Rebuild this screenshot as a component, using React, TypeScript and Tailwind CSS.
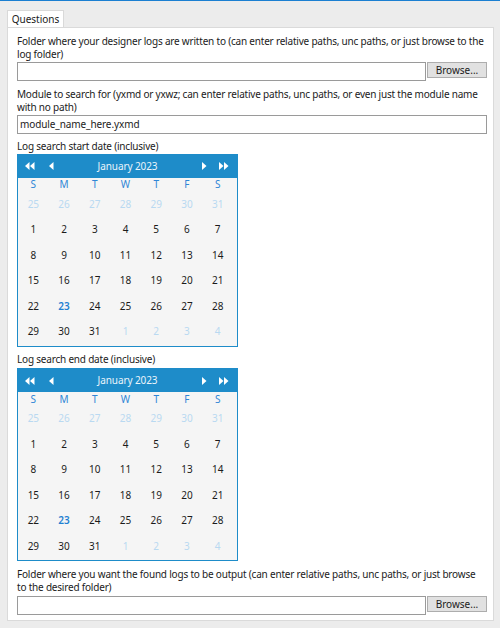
import React from "react";

const FONT = { fontFamily: '"Noto Sans", "Open Sans", sans-serif' };

type Day = { n: number; muted?: boolean; today?: boolean };

// January 2023 starts on a Sunday; the grid shows the tail of December first
// and the first days of February at the end.
function januaryGrid(): Day[] {
  const days: Day[] = [];
  for (let d = 25; d <= 31; d++) days.push({ n: d, muted: true });
  for (let d = 1; d <= 31; d++) days.push({ n: d, today: d === 23 });
  for (let d = 1; d <= 4; d++) days.push({ n: d, muted: true });
  return days;
}

function Arrow({ dir, double }: { dir: "left" | "right"; double?: boolean }) {
  const tri = (x: number) =>
    dir === "left"
      ? `M${x + 4.5} 0 L${x} 4 L${x + 4.5} 8 Z`
      : `M${x} 0 L${x + 4.5} 4 L${x} 8 Z`;
  return (
    <svg width={double ? 10 : 5} height={8} viewBox={`0 0 ${double ? 10 : 5} 8`} fill="#ffffff">
      <path d={tri(0)} />
      {double && <path d={tri(5)} />}
    </svg>
  );
}

function Calendar() {
  const days = januaryGrid();
  return (
    <div className="w-[221px] border border-[#1e8cc9] bg-[#f5f5f5]">
      <div className="flex h-[23px] items-center bg-[#1e8cc9] pl-[3px] pr-[4px] text-[#eaf4fb]">
        <span className="flex w-[18px] justify-center"><Arrow dir="left" double /></span>
        <span className="ml-[3px] flex w-[18px] justify-center"><Arrow dir="left" /></span>
        <span className="flex-1 text-center text-[10px] tracking-[-0.1px]">January 2023</span>
        <span className="flex w-[18px] justify-center"><Arrow dir="right" /></span>
        <span className="ml-[2px] flex w-[18px] justify-center"><Arrow dir="right" double /></span>
      </div>
      <div className="grid grid-cols-7 pr-[4px] pb-[1px]">
        {["S", "M", "T", "W", "T", "F", "S"].map((d, i) => (
          <div key={i} className="flex h-[14px] items-center justify-center text-[10px] text-[#2f86d6]">
            {d}
          </div>
        ))}
        {days.map((d, i) => (
          <div
            key={i}
            className={
              "flex h-[25.5px] items-center justify-center text-[10px] " +
              (d.muted
                ? "text-[#b9d9f1]"
                : d.today
                  ? "font-semibold text-[#1f7fd2]"
                  : "text-[#1b1b1b]")
            }
          >
            {d.n}
          </div>
        ))}
      </div>
    </div>
  );
}

function Label({ children }: { children: React.ReactNode }) {
  return <p className="text-[10px] leading-[12.5px] tracking-[-0.2px] text-[#1b1b1b]">{children}</p>;
}

function PathInput({ value, browse }: { value?: string; browse?: boolean }) {
  return (
    <div className="flex items-start">
      <div
        className={
          "flex h-[19px] items-center border border-[#9a9a9a] bg-white px-[2px] text-[10px] tracking-[-0.1px] text-[#1b1b1b] " +
          (browse ? "w-[409px]" : "w-[470px]")
        }
      >
        {value}
      </div>
      {browse && (
        <button className="ml-[1px] flex h-[16px] w-[60px] items-center justify-center border border-[#adadad] bg-[#e1e1e1] text-[10px] text-[#1b1b1b]">
          Browse...
        </button>
      )}
    </div>
  );
}

export default function App() {
  return (
    <div style={FONT} className="h-[628px] w-[500px] border-t border-[#1b7fd1] bg-[#ececec]">
      <div className="pl-[7px] pt-[9px]">
        <div className="flex h-[17px] w-[57px] items-center justify-center border border-b-0 border-[#d9d9d9] bg-white text-[10px] text-[#1b1b1b]">
          Questions
        </div>
      </div>
      <div className="ml-[7px] mr-[6px] h-[594px] border border-[#dadada] bg-white pl-[9px] pr-[6px] pt-[7px]">
        <Label>
          Folder where your designer logs are written to (can enter relative paths, unc paths, or just browse to the log folder)
        </Label>
        <div className="mt-[2px]">
          <PathInput browse />
        </div>
        <div className="mt-[7px]">
          <Label>
            Module to search for (yxmd or yxwz; can enter relative paths, unc paths, or even just the module name with no path)
          </Label>
        </div>
        <div className="mt-[2px]">
          <PathInput value="module_name_here.yxmd" />
        </div>
        <div className="mt-[6px]">
          <Label>Log search start date (inclusive)</Label>
        </div>
        <div className="mt-[1px]">
          <Calendar />
        </div>
        <div className="mt-[6px]">
          <Label>Log search end date (inclusive)</Label>
        </div>
        <div className="mt-[3px]">
          <Calendar />
        </div>
        <div className="mt-[7px]">
          <Label>
            Folder where you want the found logs to be output (can enter relative paths, unc paths, or just browse to the desired folder)
          </Label>
        </div>
        <div className="mt-[3px]">
          <PathInput browse />
        </div>
      </div>
    </div>
  );
}
